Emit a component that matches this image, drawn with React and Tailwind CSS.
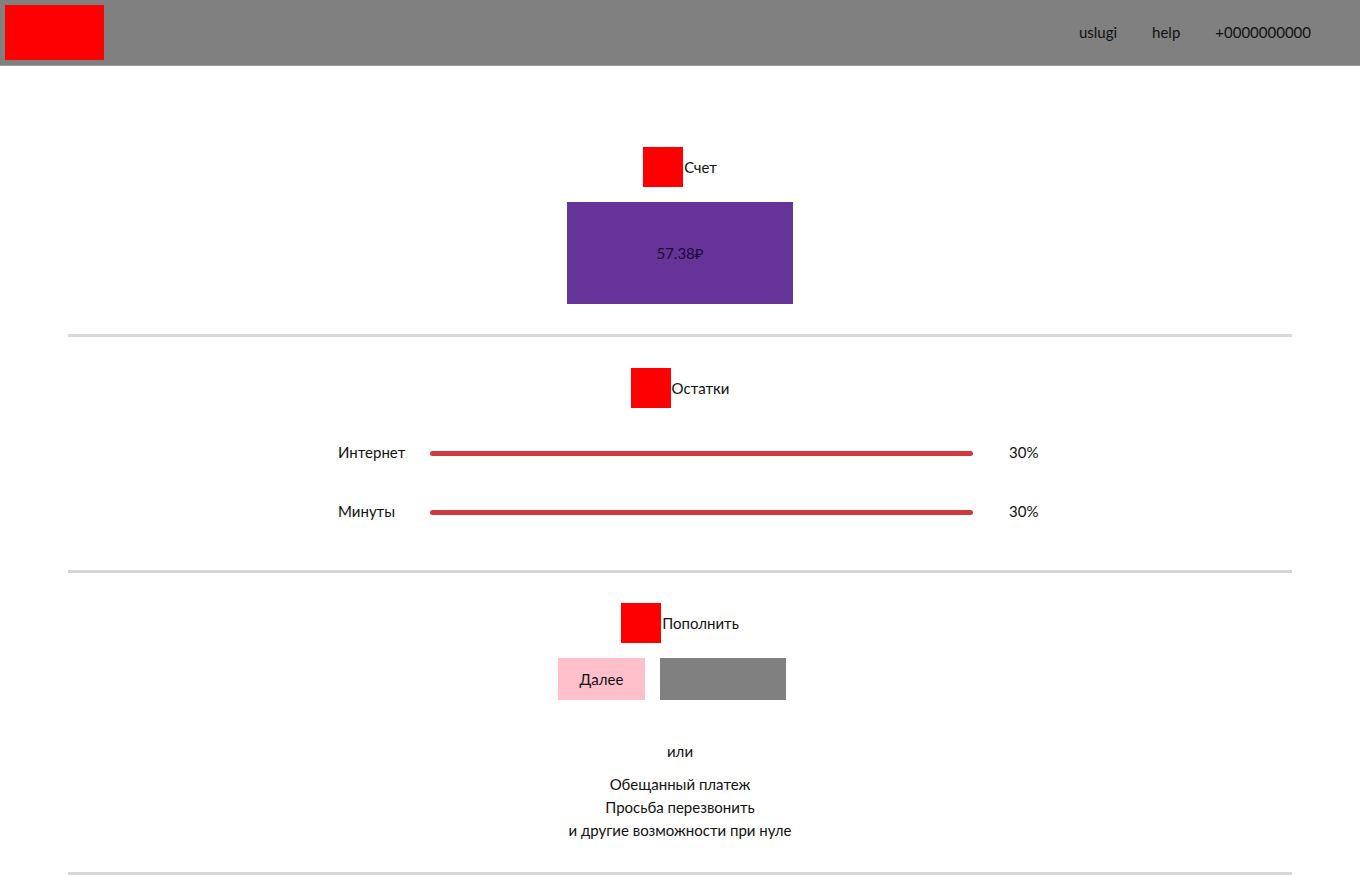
const Title = ({ children }) => (
  <div className="flex items-center justify-center">
    <div className="w-10 h-10 bg-[#ff0000]" />
    <span className="ml-px">{children}</span>
  </div>
);

const Divider = () => <div className="mx-auto w-[90%] h-[3px] bg-[#d8d8d8]" />;

const Row = ({ label, value }) => (
  <div className="flex items-center">
    <span className="w-[92px]">{label}</span>
    <div className="w-[543px] h-[5px] rounded-full bg-[#d03a3c] mt-[3px]" />
    <span className="ml-[36px]">{value}</span>
  </div>
);

export default function App() {
  return (
    <div className="min-h-[878px] bg-white text-[#111] text-[15px]" style={{ fontFamily: "Lato, 'Noto Sans', sans-serif" }}>
      <header className="h-[66px] bg-[#808080] border-b border-[#9a9a9a] flex items-center justify-between pl-[5px] pr-[49px]">
        <div className="w-[99px] h-[55px] bg-[#ff0000]" />
        <nav className="flex items-center gap-[35px] pb-[1px]">
          <span>uslugi</span>
          <span>help</span>
          <span>+0000000000</span>
        </nav>
      </header>

      <section className="pt-[81px] pb-[30px] flex flex-col items-center">
        <Title>Счет</Title>
        <div className="mt-[15px] w-[226px] h-[102px] bg-[#663399] flex items-center justify-center text-[#1a0a33]">
          57.38₽
        </div>
      </section>

      <Divider />

      <section className="pt-[31px] pb-[48px]">
        <Title>Остатки</Title>
        <div className="w-[720px] mx-auto pl-[18px] mt-[33px] flex flex-col gap-[36px]">
          <Row label="Интернет" value="30%" />
          <Row label="Минуты" value="30%" />
        </div>
      </section>

      <Divider />

      <section className="pt-[30px] pb-[30px] flex flex-col items-center">
        <Title>Пополнить</Title>
        <div className="mt-[15px] mr-[16px] flex gap-[15px]">
          <button className="w-[87px] h-[42px] bg-[#ffc0cb]">Далее</button>
          <div className="w-[126px] h-[42px] bg-[#808080]" />
        </div>
        <div className="mt-[40px]">или</div>
        <div className="mt-[10px] text-center leading-[23px]">
          <div>Обещанный платеж</div>
          <div>Просьба перезвонить</div>
          <div>и другие возможности при нуле</div>
        </div>
      </section>

      <Divider />
    </div>
  );
}
